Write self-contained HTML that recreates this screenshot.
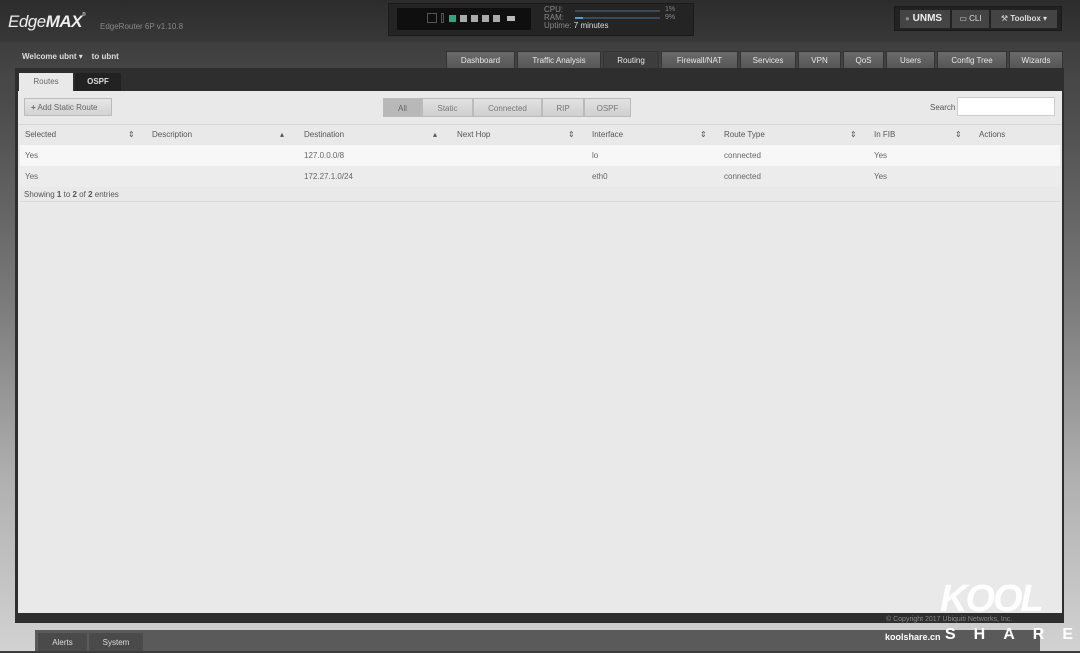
<!DOCTYPE html>
<html><head><style>
*{box-sizing:border-box;margin:0;padding:0}
body{width:1080px;height:651px;overflow:hidden;position:relative;font-family:"Liberation Sans",sans-serif;font-size:8px;color:#555;background:linear-gradient(#3c3c3c 0px,#4a4a4a 100px,#7a7a7a 300px,#b0b0b0 480px,#d2d2d2 651px)}
.abs{position:absolute}
#hdr{left:0;top:0;width:1080px;height:42px;background:linear-gradient(#2c2c2c,#383838)}
#band{left:0;top:42px;width:1080px;height:30px;background:linear-gradient(#3e3e3e,#454545)}
.tab{position:absolute;top:51px;height:18px;background:linear-gradient(#6a6a6a,#555);color:#e8e8e8;font-size:8px;text-align:center;line-height:18px;border:1px solid #333;border-bottom:none}
.tab.act{background:#3d3d3d}
#frame{left:15px;top:68px;width:1049px;height:555px;background:#2e2e2e}
#content{left:18px;top:91px;width:1044px;height:522px;background:#e9e9e9}
.th{position:absolute;top:130px;font-size:8px;color:#555}
.td{position:absolute;font-size:8px;color:#666}
.seg{position:absolute;top:98px;height:19px;line-height:19px;text-align:center;font-size:8px;color:#777;background:linear-gradient(#e2e2e2,#cfcfcf);border:1px solid #bbb}
</style></head><body>
<div id="hdr" class="abs"></div>
<div class="abs" style="left:8px;top:12px;font-size:17px;color:#eee;font-style:italic;letter-spacing:-0.5px">Edge<b>MAX</b><span style="font-size:5px;vertical-align:top">®</span></div>
<div class="abs" style="left:100px;top:22px;font-size:8px;color:#888">EdgeRouter 6P v1.10.8</div>
<div class="abs" style="left:388px;top:3px;width:306px;height:33px;background:#242424;border:1px solid #1a1a1a"></div>
<div class="abs" style="left:397px;top:8px;width:134px;height:22px;background:#0f0f0f"></div>
<div class="abs" style="left:427px;top:13px;width:10px;height:10px;border:1px solid #555"></div>
<div class="abs" style="left:441px;top:13px;width:3px;height:10px;border:1px solid #555"></div>
<div class="abs" style="left:449px;top:15px;width:7px;height:7px;background:#2aa87a"></div>
<div class="abs" style="left:460px;top:15px;width:7px;height:7px;background:#aaa"></div>
<div class="abs" style="left:471px;top:15px;width:7px;height:7px;background:#aaa"></div>
<div class="abs" style="left:482px;top:15px;width:7px;height:7px;background:#aaa"></div>
<div class="abs" style="left:493px;top:15px;width:7px;height:7px;background:#aaa"></div>
<div class="abs" style="left:507px;top:16px;width:8px;height:5px;background:#bbb"></div>
<div class="abs" style="left:544px;top:6px;font-size:8px;line-height:8px;color:#888">CPU:<br>RAM:<br>Uptime: <span style="color:#ddd">7 minutes</span></div>
<div class="abs" style="left:575px;top:10px;width:85px;height:2px;background:#3a4a58"></div>
<div class="abs" style="left:575px;top:17px;width:85px;height:2px;background:#3a4a58"></div>
<div class="abs" style="left:575px;top:17px;width:8px;height:2px;background:#4aa0d8"></div>
<div class="abs" style="left:665px;top:6px;font-size:7px;line-height:8px;color:#888">1%<br>9%</div>
<div class="abs" style="left:894px;top:6px;width:168px;height:25px;background:#222;border:1px solid #1a1a1a"></div>
<div class="abs" style="left:900px;top:10px;width:50px;height:18px;background:#444;color:#eee;font-size:10px;line-height:18px;padding-left:5px"><span style="color:#888;font-size:8px">●</span> <b>UNMS</b></div>
<div class="abs" style="left:952px;top:10px;width:37px;height:18px;background:#444;color:#ddd;font-size:8px;line-height:18px;text-align:center">▭ CLI</div>
<div class="abs" style="left:991px;top:10px;width:66px;height:18px;background:#444;color:#ddd;font-size:8px;line-height:18px;text-align:center">⚒ <b>Toolbox</b> ▾</div>
<div id="band" class="abs"></div>
<div class="abs" style="left:22px;top:52px;font-size:8px;color:#ddd"><b>Welcome ubnt</b> ▾ &nbsp;&nbsp; <b>to ubnt</b></div>
<div class="tab" style="left:446px;width:69px">Dashboard</div>
<div class="tab" style="left:517px;width:84px">Traffic Analysis</div>
<div class="tab act" style="left:603px;width:56px">Routing</div>
<div class="tab" style="left:661px;width:77px">Firewall/NAT</div>
<div class="tab" style="left:740px;width:56px">Services</div>
<div class="tab" style="left:798px;width:43px">VPN</div>
<div class="tab" style="left:843px;width:41px">QoS</div>
<div class="tab" style="left:886px;width:49px">Users</div>
<div class="tab" style="left:937px;width:70px">Config Tree</div>
<div class="tab" style="left:1009px;width:54px">Wizards</div>
<div id="frame" class="abs"></div>
<div class="abs" style="left:19px;top:73px;width:54px;height:18px;background:#e9e9e9;color:#666;text-align:center;line-height:18px">Routes</div>
<div class="abs" style="left:75px;top:73px;width:46px;height:18px;background:#222;color:#ddd;text-align:center;line-height:18px;font-weight:bold">OSPF</div>
<div id="content" class="abs"></div>
<div class="abs" style="left:24px;top:98px;width:88px;height:18px;background:linear-gradient(#e6e6e6,#d3d3d3);border:1px solid #bbb;line-height:17px;color:#666;padding-left:6px"><b>+</b> Add Static Route</div>
<div class="seg" style="left:383px;width:39px;background:#b8b8b8;color:#666">All</div>
<div class="seg" style="left:422px;width:51px">Static</div>
<div class="seg" style="left:473px;width:69px">Connected</div>
<div class="seg" style="left:542px;width:42px">RIP</div>
<div class="seg" style="left:584px;width:47px">OSPF</div>
<div class="abs" style="left:930px;top:103px;color:#555">Search</div>
<div class="abs" style="left:957px;top:97px;width:98px;height:19px;background:#fff;border:1px solid #ccc"></div>
<div class="abs" style="left:18px;top:124px;width:1044px;height:1px;background:#d5d5d5"></div>
<div class="th" style="left:25px">Selected</div><div class="th" style="left:128px">⇕</div>
<div class="th" style="left:152px">Description</div><div class="th" style="left:280px">▴</div>
<div class="th" style="left:304px">Destination</div><div class="th" style="left:433px">▴</div>
<div class="th" style="left:457px">Next Hop</div><div class="th" style="left:568px">⇕</div>
<div class="th" style="left:592px">Interface</div><div class="th" style="left:700px">⇕</div>
<div class="th" style="left:724px">Route Type</div><div class="th" style="left:850px">⇕</div>
<div class="th" style="left:874px">In FIB</div><div class="th" style="left:955px">⇕</div>
<div class="th" style="left:979px">Actions</div>
<div class="abs" style="left:20px;top:145px;width:1040px;height:21px;background:#f7f7f7"></div>
<div class="abs" style="left:20px;top:166px;width:1040px;height:21px;background:#ececec"></div>
<div class="td" style="left:25px;top:151px">Yes</div><div class="td" style="left:304px;top:151px">127.0.0.0/8</div><div class="td" style="left:592px;top:151px">lo</div><div class="td" style="left:724px;top:151px">connected</div><div class="td" style="left:874px;top:151px">Yes</div>
<div class="td" style="left:25px;top:172px">Yes</div><div class="td" style="left:304px;top:172px">172.27.1.0/24</div><div class="td" style="left:592px;top:172px">eth0</div><div class="td" style="left:724px;top:172px">connected</div><div class="td" style="left:874px;top:172px">Yes</div>
<div class="td" style="left:24px;top:190px;color:#555">Showing <b>1</b> to <b>2</b> of <b>2</b> entries</div>
<div class="abs" style="left:20px;top:201px;width:1040px;height:1px;background:#d8d8d8"></div>
<div class="abs" style="left:886px;top:616px;font-size:7px;color:#888">© Copyright 2017 Ubiquiti Networks, Inc.</div>
<div class="abs" style="left:35px;top:630px;width:1005px;height:21px;background:#5a5a5a"></div>
<div class="abs" style="left:38px;top:633px;width:49px;height:18px;background:#4a4a4a;color:#ddd;text-align:center;line-height:20px">Alerts</div>
<div class="abs" style="left:89px;top:633px;width:54px;height:18px;background:#4a4a4a;color:#ddd;text-align:center;line-height:20px">System</div>
<div class="abs" style="left:940px;top:578px;font-size:38px;font-weight:bold;color:#fff;letter-spacing:-2px;font-style:italic">KOOL</div>
<div class="abs" style="left:885px;top:632px;font-size:9px;color:#fff;font-weight:bold">koolshare.cn</div>
<div class="abs" style="left:945px;top:626px;font-size:16px;color:#fff;font-weight:bold;letter-spacing:18px">SHARE</div>
</body></html>
